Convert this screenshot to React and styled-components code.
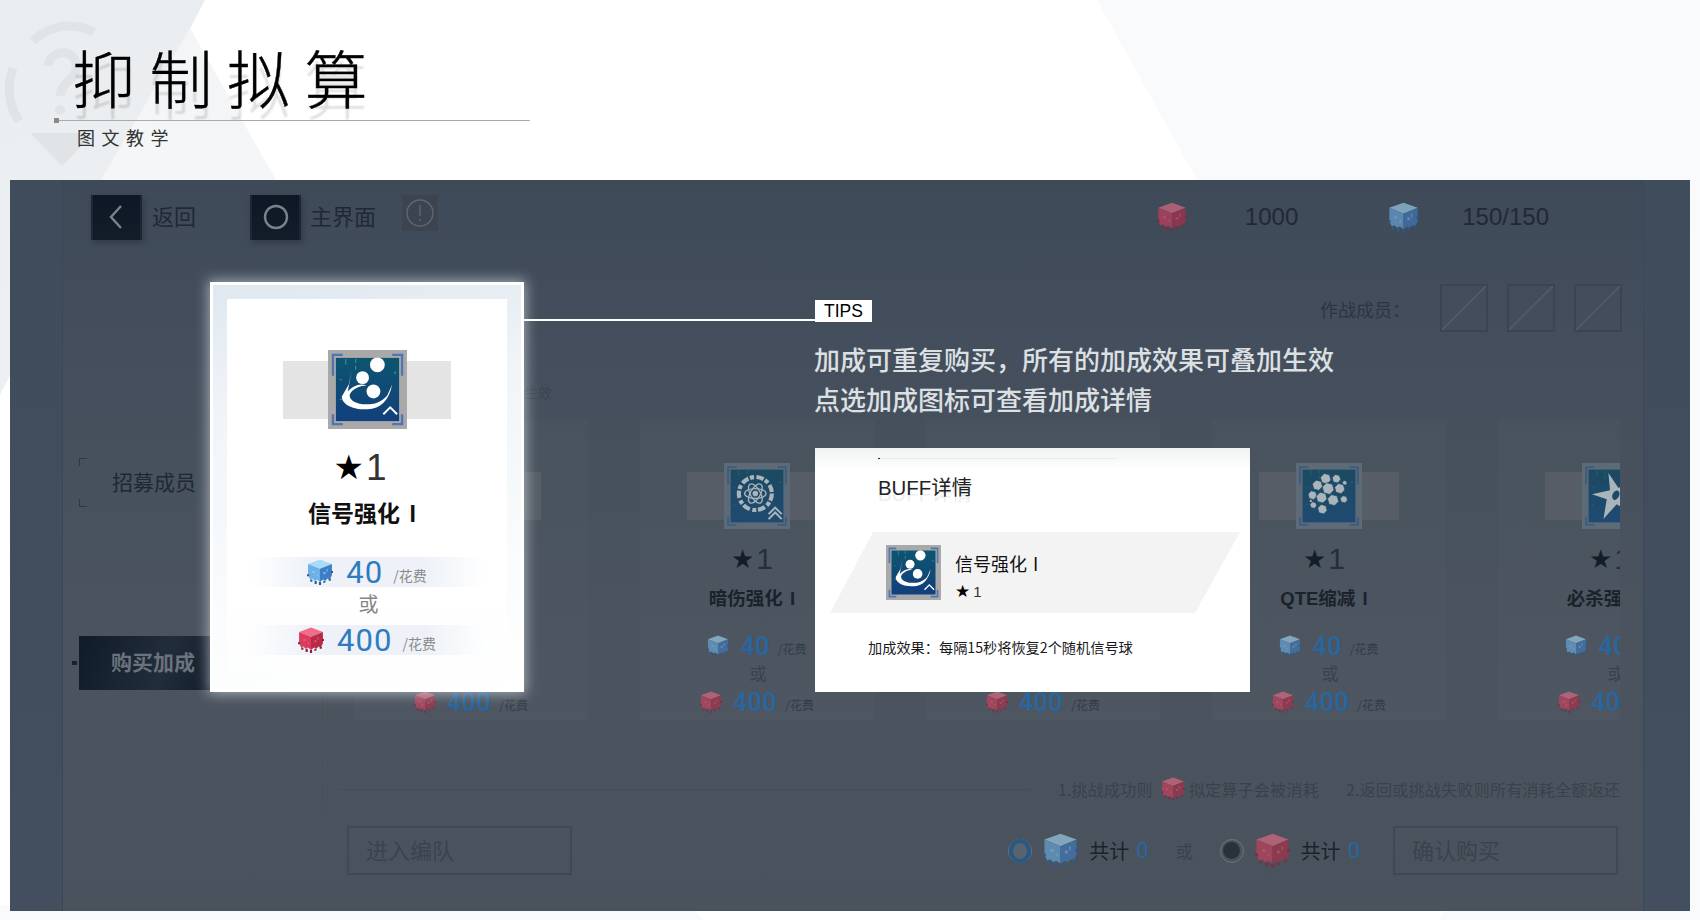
import React from "react";
import styled, { createGlobalStyle } from "styled-components";

const SANS = `"Liberation Sans", "Noto Sans CJK SC", sans-serif`;
const CJK = `"Noto Sans CJK SC", "Liberation Sans", sans-serif`;
const NUM = `Roboto, "Liberation Sans", sans-serif`;

const Global = createGlobalStyle`
  html, body { margin: 0; padding: 0; background: #fff; }
  body { font-family: ${SANS}; }
  * { box-sizing: border-box; }
`;

const Page = styled.div`
  position: relative;
  width: 1700px;
  height: 920px;
  overflow: hidden;
  background: #fff;
  display: flex;
  flex-direction: column;
  &::before {
    content: "";
    position: absolute;
    inset: 0;
    background: #f9fafb;
    clip-path: polygon(1097px 0, 1700px 0, 1700px 920px, 1438px 920px, 1460px 890px, 1690px 890px, 1690px 180px, 1197px 180px);
  }
  &::after {
    content: "";
    position: absolute;
    inset: 0;
    background: #f9fafb;
    clip-path: polygon(0 905px, 690px 905px, 704px 920px, 0 920px);
  }
`;

const LeftFacet = styled.div`
  position: absolute;
  inset: 0;
  background: linear-gradient(160deg, #e9edef 0%, #f1f3f5 45%, #f7f8f9 100%);
  clip-path: polygon(0 0, 205px 0, 0 395px);
`;

const SoftFacet = styled.div`
  position: absolute;
  inset: 0;
  background: linear-gradient(200deg, #eef1f3 0%, #f7f8f9 70%);
  clip-path: polygon(190px 28px, 276px 180px, 101px 180px);
`;

const Watermark = styled.svg`
  position: absolute;
  left: 0;
  top: 8px;
  width: 126px;
  height: 170px;
`;

const Header = styled.header`
  position: relative;
  z-index: 1;
  height: 180px;
  padding: 40px 0 0 54px;
`;

const Title = styled.h1`
  margin: -4px 0 4px;
  padding-left: 18px;
  font-family: ${CJK};
  font-size: 63px;
  font-weight: 300;
  -webkit-text-stroke: 0.4px #000;
  line-height: 80px;
  letter-spacing: 14.5px;
  color: #000;
  text-shadow: 0 11px 2px rgba(0, 0, 0, 0.13);
`;

const TitleRule = styled.div`
  position: relative;
  width: 476px;
  height: 1px;
  background: #aaa;
  &::before {
    content: "";
    position: absolute;
    left: 0;
    top: -2px;
    width: 5px;
    height: 5px;
    background: #8a8a8a;
  }
`;

const Subtitle = styled.div`
  margin-top: 6px;
  padding-left: 23px;
  font-family: ${CJK};
  font-size: 18px;
  line-height: 20px;
  letter-spacing: 6.5px;
  color: #333;
`;

const Screen = styled.section`
  position: relative;
  z-index: 1;
  width: 1680px;
  height: 731px;
  margin-left: 10px;
  padding: 0 46px 0 52px;
  display: flex;
  background: linear-gradient(180deg, #3f4c5c, #434f5e);
`;

const Stage = styled.div`
  position: relative;
  flex: 1;
  min-width: 0;
  display: flex;
  flex-direction: column;
  border-left: 1px solid #3b4756;
  border-right: 1px solid #3b4756;
  background: linear-gradient(180deg, #3f4a59 0%, #47515e 38%, #4b545e 70%, #4a535d 100%);
  color: #1f2833;
  font-family: ${CJK};
  &::before {
    content: "";
    position: absolute;
    left: 259px;
    top: 460px;
    width: 1px;
    height: 180px;
    background: #475059;
  }
`;

const TopBar = styled.div`
  display: flex;
  align-items: center;
  margin-top: 14px;
  height: 46px;
  padding: 0 94px 0 28px;
`;

const NavButton = styled.div`
  width: 51px;
  height: 45px;
  display: flex;
  align-items: center;
  justify-content: center;
  background: linear-gradient(180deg, #0e1824, #121d2a);
  border-left: 2px solid #1d2733;
  border-right: 2px solid #1d2733;
  box-shadow: 2px 3px 6px rgba(20, 28, 38, 0.35);
`;

const NavGlyph = styled.svg`
  width: 30px;
  height: 30px;
  fill: none;
  stroke: #7a828b;
  stroke-width: 2.4;
`;

const NavLabel = styled.span`
  font-size: 22px;
  line-height: 30px;
  color: #1f2935;
  margin-top: -4px;
  margin-left: ${(p) => p.$gap}px;
  margin-right: ${(p) => p.$after}px;
`;

const InfoButton = styled.div`
  width: 36px;
  height: 36px;
  display: flex;
  align-items: center;
  justify-content: center;
  background: #3b444f;
  margin-top: -8px;
`;

const InfoGlyph = styled.svg`
  width: 30px;
  height: 30px;
  fill: none;
  stroke: #5f6771;
  stroke-width: 1.4;
`;

const Resources = styled.div`
  margin-left: auto;
  display: flex;
  align-items: center;
`;

const ResourceValue = styled.span`
  font-family: ${SANS};
  font-size: 24px;
  color: #1f2935;
  margin-left: ${(p) => p.$gap}px;
  margin-right: ${(p) => p.$after}px;
`;

const MembersRow = styled.div`
  display: flex;
  align-items: center;
  justify-content: flex-end;
  gap: 19px;
  margin-top: 44px;
  height: 48px;
  padding-right: 21px;
`;

const MembersLabel = styled.span`
  font-size: 18px;
  color: #2c3641;
  margin-right: 11px;
  margin-top: 2px;
`;

const Slot = styled.div`
  width: 48px;
  height: 48px;
  border: 2px solid #3b444f;
  background: linear-gradient(
    to bottom right,
    transparent calc(50% - 1px),
    #58626d 50%,
    transparent calc(50% + 1px)
  );
`;

const Main = styled.div`
  display: flex;
  margin-top: 52px;
  height: 336px;
  padding-right: 23px;
`;

const Sidebar = styled.nav`
  flex: 0 0 291px;
  padding: 74px 0 0 16px;
`;

const RecruitTab = styled.div`
  position: relative;
  height: 49px;
  padding: 0 0 4px 33px;
  display: flex;
  align-items: center;
  font-size: 21px;
  color: #1e2833;
  &::before,
  &::after {
    content: "";
    position: absolute;
    left: 0;
    width: 7px;
    height: 7px;
    border-left: 1px solid #2f3845;
  }
  &::before {
    top: 0;
    border-top: 1px solid #2f3845;
  }
  &::after {
    bottom: 0;
    border-bottom: 1px solid #2f3845;
  }
`;

const BuyTab = styled.div`
  position: relative;
  margin-top: 129px;
  width: 140px;
  height: 54px;
  padding: 0 0 4px 32px;
  display: flex;
  align-items: center;
  font-size: 21px;
  font-weight: 700;
  color: #6a727b;
  background: linear-gradient(110deg, #101b29, #222d3b 60%, #101b29);
  &::before {
    content: "";
    position: absolute;
    left: -7px;
    top: 25px;
    width: 5px;
    height: 4px;
    background: #1a2230;
  }
`;

const CardsColumn = styled.div`
  flex: 1;
  min-width: 0;
  overflow: hidden;
`;

const Hint = styled.div`
  height: 16px;
  margin: 0 0 20px 30px;
  font-size: 14px;
  line-height: 16px;
  color: #3a444f;
`;

const CardRow = styled.div`
  display: flex;
  gap: 52px;
  height: 300px;
`;

const DimCard = styled.article`
  flex: 0 0 234px;
  padding-top: 43px;
  background: linear-gradient(180deg, #49535e, #4d5661);
`;

const Body = styled.div`
  display: flex;
  flex-direction: column;
  align-items: center;
`;

const IconBand = styled.div`
  display: flex;
  justify-content: center;
  align-items: center;
  width: ${(p) => (p.$big ? 168 : 140)}px;
  height: ${(p) => (p.$big ? 79 : 66)}px;
  background: linear-gradient(${(p) => (p.$big ? "#e4e4e4" : "#565d66")}, ${(p) => (p.$big ? "#e4e4e4" : "#565d66")})
    center / 100% ${(p) => (p.$big ? 58 : 48)}px no-repeat;
`;

const IconSvg = styled.svg`
  display: block;
  width: ${(p) => p.$size}px;
  height: ${(p) => p.$size}px;
  flex: none;
`;

const StarRow = styled.div`
  display: flex;
  align-items: center;
  justify-content: center;
  gap: 2px;
  height: ${(p) => (p.$big ? 32 : 24)}px;
  margin: ${(p) => (p.$big ? "22px 14px 0 0" : "18px 10px 0 0")};
`;

const Star = styled.span`
  font-family: "DejaVu Sans", sans-serif;
  font-size: ${(p) => (p.$big ? 34 : 26)}px;
  line-height: 1;
  color: ${(p) => (p.$big ? "#000" : "#141c2a")};
`;

const StarNum = styled.span`
  font-family: ${SANS};
  font-size: ${(p) => (p.$big ? 37 : 30)}px;
  line-height: 1;
  color: ${(p) => (p.$big ? "#333" : "#262f39")};
`;

const BuffName = styled.div`
  margin: ${(p) => (p.$big ? "17px 0 0 -10px" : "17px 10px -1px 0")};
  height: ${(p) => (p.$big ? 28 : 22)}px;
  line-height: ${(p) => (p.$big ? 28 : 22)}px;
  font-family: ${SANS};
  font-weight: 700;
  font-size: ${(p) => (p.$big ? 23 : 18.5)}px;
  word-spacing: ${(p) => (p.$big ? 3 : 2)}px;
  white-space: nowrap;
  color: ${(p) => (p.$big ? "#111" : "#1a222c")};
`;

const CostRow = styled.div`
  display: flex;
  align-items: center;
  justify-content: center;
  width: ${(p) => (p.$big ? 235 : 200)}px;
  height: ${(p) => (p.$big ? 30 : 26)}px;
  margin-top: ${(p) => p.$mt}px;
  background: ${(p) =>
    p.$big
      ? "linear-gradient(90deg, transparent, #eef2f8 25%, #eef2f8 75%, transparent)"
      : "transparent"};
`;

const CostNum = styled.span`
  font-family: ${NUM};
  font-weight: ${(p) => (p.$big ? 400 : 500)};
  font-size: ${(p) => (p.$big ? 31 : 25)}px;
  letter-spacing: ${(p) => (p.$big ? 1 : 0.5)}px;
  line-height: 1;
  margin: ${(p) => (p.$big ? "0 10px 0 13px" : "0 8px 0 11px")};
  color: ${(p) => (p.$big ? "#2d7cc0" : "#2766a0")};
`;

const CostUnit = styled.span`
  font-family: ${CJK};
  font-size: ${(p) => (p.$big ? 14 : 12)}px;
  margin-top: ${(p) => (p.$big ? 6 : 5)}px;
  color: ${(p) => (p.$big ? "#8a8a8a" : "#333d48")};
`;

const OrText = styled.div`
  font-size: ${(p) => (p.$big ? 20 : 17)}px;
  line-height: ${(p) => (p.$big ? 24 : 20)}px;
  margin-top: ${(p) => (p.$big ? 5 : 4)}px;
  padding-left: ${(p) => (p.$big ? 3 : 2)}px;
  color: ${(p) => (p.$big ? "#858585" : "#38424d")};
  font-family: ${CJK};
`;

const NotesRow = styled.div`
  display: flex;
  align-items: center;
  height: 20px;
  margin: 59px 0 0 277px;
  padding-right: 23px;
  font-size: 16.3px;
  color: #38424d;
  white-space: nowrap;
`;

const NotesRule = styled.div`
  flex: 1;
  height: 1px;
  background: #454e58;
  margin-right: 27px;
`;

const NoteGap = styled.span`
  margin: 0 ${(p) => p.$r}px 0 ${(p) => p.$l}px;
  display: flex;
`;

const BottomRow = styled.div`
  display: flex;
  align-items: center;
  margin-top: 27px;
  height: 49px;
  padding: 0 25px 0 284px;
`;

const GhostButton = styled.div`
  width: 225px;
  height: 49px;
  padding: 0 0 4px 17px;
  display: flex;
  align-items: center;
  border: 2px solid #3f4853;
  font-size: 22px;
  color: #39434e;
`;

const Totals = styled.div`
  margin-left: auto;
  display: flex;
  align-items: center;
  margin-right: 33px;
`;

const Radio = styled.span`
  display: flex;
  align-items: center;
  justify-content: center;
  width: 24px;
  height: 24px;
  border-radius: 50%;
  border: 1px solid #6b747e;
  margin-right: 11px;
  &::after {
    content: "";
    width: ${(p) => (p.$filled ? 17 : 16)}px;
    height: ${(p) => (p.$filled ? 17 : 16)}px;
    border-radius: 50%;
    background: ${(p) => (p.$filled ? "#2b3138" : "#59636d")};
    border: ${(p) => (p.$filled ? "none" : "4px solid #245a85")};
  }
`;

const TotalLabel = styled.span`
  font-size: 20px;
  color: #1a222c;
  margin-left: 11px;
`;

const TotalNum = styled.span`
  font-family: ${NUM};
  font-size: 22px;
  color: #2766a0;
  margin-left: 7px;
`;

const TotalOr = styled.span`
  font-size: 17px;
  color: #38424d;
  margin: 0 27px;
`;

const Highlight = styled.article`
  position: absolute;
  z-index: 3;
  left: 200px;
  top: 102px;
  width: 314px;
  height: 410px;
  padding: 14px;
  border: 3px solid #fff;
  background: linear-gradient(170deg, #dfe8f0 0, #f1f5f8 30%, #f9fbfc 70%, #fff 100%);
  box-shadow: 0 0 12px 2px rgba(235, 242, 248, 0.55);
`;

const HighlightInner = styled.div`
  height: 100%;
  padding-top: 51px;
  background: linear-gradient(180deg, #fff 80%, rgba(255, 255, 255, 0.4));
`;

const Connector = styled.div`
  position: absolute;
  z-index: 3;
  left: 514px;
  top: 139px;
  width: 291px;
  height: 2px;
  background: #fff;
`;

const Callout = styled.div`
  position: absolute;
  z-index: 3;
  left: 805px;
  top: 120px;
  width: 435px;
`;

const TipsTag = styled.div`
  width: 57px;
  height: 22px;
  padding-left: 9px;
  background: #fff;
  color: #000;
  font-family: ${SANS};
  font-size: 17.5px;
  line-height: 22px;
`;

const TipText = styled.p`
  margin: 17px 0 0 -1px;
  width: 560px;
  font-family: ${CJK};
  font-weight: 500;
  font-size: 26px;
  line-height: 40px;
  color: #dde0e3;
`;

const DetailCard = styled.div`
  position: relative;
  margin-top: 29px;
  height: 244px;
  padding: 27px 0 0 15px;
  background: linear-gradient(180deg, #f0f1f2 0, #fff 22px, #fff 100%);
  color: #111;
  &::before {
    content: "";
    position: absolute;
    left: 63px;
    top: 10px;
    width: 240px;
    height: 1px;
    background: linear-gradient(90deg, #222 2px, #ececec 2px);
  }
`;

const DetailTitle = styled.h2`
  margin: 0 0 0 48px;
  height: 26px;
  font-family: ${SANS};
  font-weight: 400;
  font-size: 20.4px;
  line-height: 26px;
  color: #222;
  text-shadow: 0 6px 1px rgba(0, 0, 0, 0.08);
`;

const DetailBand = styled.div`
  display: flex;
  align-items: center;
  gap: 14px;
  margin-top: 31px;
  width: 410px;
  height: 81px;
  padding-left: 56px;
  background: #f3f3f4;
  clip-path: polygon(43px 0, 100% 0, 365px 100%, 0 100%);
`;

const DetailTexts = styled.div`
  display: flex;
  flex-direction: column;
  gap: 6px;
  padding-top: 5px;
`;

const DetailName = styled.div`
  font-family: ${CJK};
  font-size: 18px;
  line-height: 26px;
  word-spacing: 2px;
  color: #111;
`;

const DetailStars = styled.div`
  display: flex;
  align-items: center;
  gap: 3px;
  height: 18px;
`;

const SmallStar = styled.span`
  font-family: "DejaVu Sans", sans-serif;
  font-size: 17px;
  color: #000;
`;

const SmallNum = styled.span`
  font-family: ${SANS};
  font-size: 15px;
  color: #333;
`;

const DetailEffect = styled.div`
  margin: 24px 0 0 38px;
  font-family: ${CJK};
  font-size: 14.2px;
  line-height: 20px;
  color: #1a1a1a;
  white-space: nowrap;
`;

const PIN = "#e0e4e6";

const PALETTE = {
  bright: { frame: "#a9a9a9", bg1: "#0d5570", bg2: "#123f7c", ink: "#ffffff", bracket: "#4f76b0", grid: "#2a8fa0" },
  dim: { frame: "#5d6a77", bg1: "#1b4a62", bg2: "#1f4a72", ink: "#aab4bb", bracket: "#3f5c7e", grid: "#2d6272" },
};

const hexPoints = (cx, cy, r) =>
  Array.from({ length: 6 }, (_, i) => {
    const a = (Math.PI / 3) * i + 0.25;
    return `${(cx + r * Math.cos(a)).toFixed(1)},${(cy + r * Math.sin(a)).toFixed(1)}`;
  }).join(" ");

const HEXES = [
  [36, 19, 6.6], [49, 19, 5.4], [59, 24, 3], [26, 27, 6.4], [39, 31, 7.4], [53, 31, 6.4],
  [20, 39, 5.6], [31, 42, 6.8], [45, 45, 7], [58, 44, 4.6], [21, 51, 4.2], [32, 56, 6], [18, 46, 2],
];

const Motif = ({ kind, ink, bg }) => {
  if (kind === "signal")
    return (
      <g fill={ink}>
        <circle cx="50" cy="15" r="7.5" />
        <circle cx="35" cy="28" r="6.5" />
        <circle cx="46" cy="42" r="7" />
        <path d="M24 21 L21 35 L14 47 C14 56 28 61 40 60 C53 60 62 51 65 35 L60 46 C54 53 47 55 39 55 C29 55 21 51 22 45 C25 39 33 36 39 36 C32 33 25 37 20 42 Z" />
        <polyline points="56,65 63,58 70,65" fill="none" stroke={ink} strokeWidth="2" />
      </g>
    );
  if (kind === "damage")
    return (
      <g>
        <circle cx="38" cy="37" r="20" fill="none" stroke={ink} strokeWidth="5" strokeDasharray="9 2 5 3" />
        <g fill="none" stroke={ink} strokeWidth="1.6">
          {[0, 60, 120].map((a) => (
            <ellipse key={a} cx="38" cy="37" rx="13" ry="6" transform={`rotate(${a} 38 37)`} />
          ))}
        </g>
        <circle cx="38" cy="37" r="3.4" fill={ink} />
        <polyline points="54,62 62,54 70,62" fill="none" stroke={ink} strokeWidth="2.4" />
        <polyline points="54,68 62,60 70,68" fill="none" stroke={ink} strokeWidth="2.4" />
      </g>
    );
  if (kind === "qte")
    return (
      <g>
        {HEXES.map(([x, y, r]) => (
          <polygon key={`${x}-${y}`} points={hexPoints(x, y, r)} fill={ink} stroke={bg} strokeWidth="0.9" />
        ))}
      </g>
    );
  if (kind === "kill")
    return (
      <g fill={ink}>
        <path d="M32 12 L44 30 L70 22 L52 42 L66 64 L42 50 L26 68 L30 44 L12 38 L34 33 Z" />
        <ellipse cx="41" cy="39" rx="4" ry="6" fill={bg} transform="rotate(25 41 39)" />
      </g>
    );
  return (
    <g fill={ink}>
      <path d="M40 14 L62 26 V52 L40 64 L18 52 V26 Z" fill="none" stroke={ink} strokeWidth="4" />
      <circle cx="40" cy="39" r="8" />
    </g>
  );
};

const BuffIcon = ({ kind, size, tone }) => {
  const c = PALETTE[tone];
  const id = `bg-${kind}-${tone}-${size}`;
  return (
    <IconSvg $size={size} viewBox="0 0 80 80">
      <defs>
        <linearGradient id={id} x1="0" y1="0" x2="0" y2="1">
          <stop offset="0" stopColor={c.bg1} />
          <stop offset="1" stopColor={c.bg2} />
        </linearGradient>
      </defs>
      <rect width="80" height="80" fill={c.frame} />
      <rect x="8" y="8" width="64" height="64" fill={`url(#${id})`} />
      <path d="M18 15V9M28 13V9M28 20V16M12 30H14M12 50H14" stroke={c.grid} strokeWidth="1.2" />
      <path d="M67 22h2v2h-2z" fill={c.grid} />
      <path
        d="M15 5H5V15M65 5H75V15M15 75H5V65M65 75H75V65M5 15V26M75 15V26"
        fill="none"
        stroke={c.bracket}
        strokeWidth="2.4"
      />
      <Motif kind={kind} ink={c.ink} bg={c.bg1} />
    </IconSvg>
  );
};

const CUBES = {
  blue: { top: "#a6dcf8", left: "#6bb0e8", right: "#3d7fc6", drip: "#2c5d99" },
  red: { top: "#f06d88", left: "#d93c5c", right: "#b92a47", drip: "#8e2038" },
};

const DimWrap = styled.g`
  opacity: ${(p) => (p.$dim ? 0.6 : 1)};
`;

const Cube = ({ tone, size, dim }) => {
  const c = CUBES[tone];
  return (
    <IconSvg $size={size} viewBox="0 0 24 24">
      <DimWrap $dim={dim}>
        <polygon points="12,0.5 23,4.5 12,9 1,4.5" fill={c.top} />
        <polygon points="1,4.5 12,9 12,21 9,19 7,20 5,18 3,19 1,15" fill={c.left} />
        <polygon points="23,4.5 12,9 12,21 15,19 17,20 19,18 21,19 23,15" fill={c.right} />
        <path d="M3 19h2v2H3zM7 20h2v3H7zM11 21h2v3h-2zM15 20h2v2h-2zM20 18h2v2h-2zM0 14h2v2H0zM22 11h2v2h-2z" fill={c.drip} />
        <path d="M5 11h2v2H5zM9 14h1v2H9zM15 12h2v2h-2zM18 9h1v3h-1z" fill={c.top} opacity="0.6" />
      </DimWrap>
    </IconSvg>
  );
};

const CardContent = ({ buff, big }) => {
  const cube = big ? 26 : 22;
  return (
    <Body>
      <IconBand $big={big}>
        <BuffIcon kind={buff.kind} size={big ? 79 : 66} tone={big ? "bright" : "dim"} />
      </IconBand>
      <StarRow $big={big}>
        <Star $big={big}>★</Star>
        <StarNum $big={big}>1</StarNum>
      </StarRow>
      <BuffName $big={big}>{buff.name}</BuffName>
      <CostRow $big={big} $mt={big ? 29 : 24}>
        <Cube tone="blue" size={cube} dim={!big} />
        <CostNum $big={big}>40</CostNum>
        <CostUnit $big={big}>/花费</CostUnit>
      </CostRow>
      <OrText $big={big}>或</OrText>
      <CostRow $big={big} $mt={big ? 9 : 6}>
        <Cube tone="red" size={cube} dim={!big} />
        <CostNum $big={big}>400</CostNum>
        <CostUnit $big={big}>/花费</CostUnit>
      </CostRow>
    </Body>
  );
};

const BUFFS = [
  { id: "a", kind: "signal", name: "信号强化 I" },
  { id: "b", kind: "damage", name: "暗伤强化 I" },
  { id: "c", kind: "energy", name: "能量强化 I" },
  { id: "d", kind: "qte", name: "QTE缩减 I" },
  { id: "e", kind: "kill", name: "必杀强化 I" },
];

export default function App() {
  return (
    <Page>
      <Global />
      <LeftFacet />
      <SoftFacet />
      <Watermark viewBox="0 0 126 170">
        <g fill="none" stroke={PIN} strokeWidth="9">
          <path d="M33 33 A52 52 0 0 1 94 24" />
          <path d="M19 113 A58 58 0 0 1 13 60" />
          <path d="M48 58 C50 40 78 40 76 60 C75 74 62 72 60 88" />
        </g>
        <circle cx="60" cy="102" r="5" fill={PIN} />
        <path d="M30 125 H94 L62 158 Z" fill={PIN} />
      </Watermark>

      <Header>
        <Title>抑制拟算</Title>
        <TitleRule />
        <Subtitle>图文教学</Subtitle>
      </Header>

      <Screen>
        <Stage>
          <TopBar>
            <NavButton>
              <NavGlyph viewBox="0 0 30 30">
                <polyline points="19,4 9,15 19,26" />
              </NavGlyph>
            </NavButton>
            <NavLabel $gap={10} $after={54}>返回</NavLabel>
            <NavButton>
              <NavGlyph viewBox="0 0 30 30">
                <circle cx="15" cy="15" r="11" />
              </NavGlyph>
            </NavButton>
            <NavLabel $gap={9} $after={26}>主界面</NavLabel>
            <InfoButton>
              <InfoGlyph viewBox="0 0 30 30">
                <circle cx="15" cy="15" r="13" />
                <path d="M15 7V18M15 21V23" />
              </InfoGlyph>
            </InfoButton>
            <Resources>
              <Cube tone="red" size={30} dim />
              <ResourceValue $gap={58} $after={90}>1000</ResourceValue>
              <Cube tone="blue" size={31} dim />
              <ResourceValue $gap={43} $after={0}>150/150</ResourceValue>
            </Resources>
          </TopBar>

          <MembersRow>
            <MembersLabel>作战成员：</MembersLabel>
            <Slot />
            <Slot />
            <Slot />
          </MembersRow>

          <Main>
            <Sidebar>
              <RecruitTab>招募成员</RecruitTab>
              <BuyTab>购买加成</BuyTab>
            </Sidebar>
            <CardsColumn>
              <Hint>所有的加成效果可叠加生效</Hint>
              <CardRow>
                {BUFFS.map((b) => (
                  <DimCard key={b.id}>
                    <CardContent buff={b} />
                  </DimCard>
                ))}
              </CardRow>
            </CardsColumn>
          </Main>

          <NotesRow>
            <NotesRule />
            1.挑战成功则
            <NoteGap $l={8} $r={4}>
              <Cube tone="red" size={24} dim />
            </NoteGap>
            拟定算子会被消耗
            <NoteGap $l={27} $r={0} />
            2.返回或挑战失败则所有消耗全额返还
          </NotesRow>

          <BottomRow>
            <GhostButton>进入编队</GhostButton>
            <Totals>
              <Radio />
              <Cube tone="blue" size={35} dim />
              <TotalLabel>共计</TotalLabel>
              <TotalNum>0</TotalNum>
              <TotalOr>或</TotalOr>
              <Radio $filled />
              <Cube tone="red" size={35} dim />
              <TotalLabel>共计</TotalLabel>
              <TotalNum>0</TotalNum>
            </Totals>
            <GhostButton>确认购买</GhostButton>
          </BottomRow>
        </Stage>

        <Highlight>
          <HighlightInner>
            <CardContent buff={BUFFS[0]} big />
          </HighlightInner>
        </Highlight>

        <Connector />

        <Callout>
          <TipsTag>TIPS</TipsTag>
          <TipText>
            加成可重复购买，所有的加成效果可叠加生效
            <br />
            点选加成图标可查看加成详情
          </TipText>
          <DetailCard>
            <DetailTitle>BUFF详情</DetailTitle>
            <DetailBand>
              <BuffIcon kind="signal" size={55} tone="bright" />
              <DetailTexts>
                <DetailName>信号强化 I</DetailName>
                <DetailStars>
                  <SmallStar>★</SmallStar>
                  <SmallNum>1</SmallNum>
                </DetailStars>
              </DetailTexts>
            </DetailBand>
            <DetailEffect>加成效果：每隔15秒将恢复2个随机信号球</DetailEffect>
          </DetailCard>
        </Callout>
      </Screen>
    </Page>
  );
}
